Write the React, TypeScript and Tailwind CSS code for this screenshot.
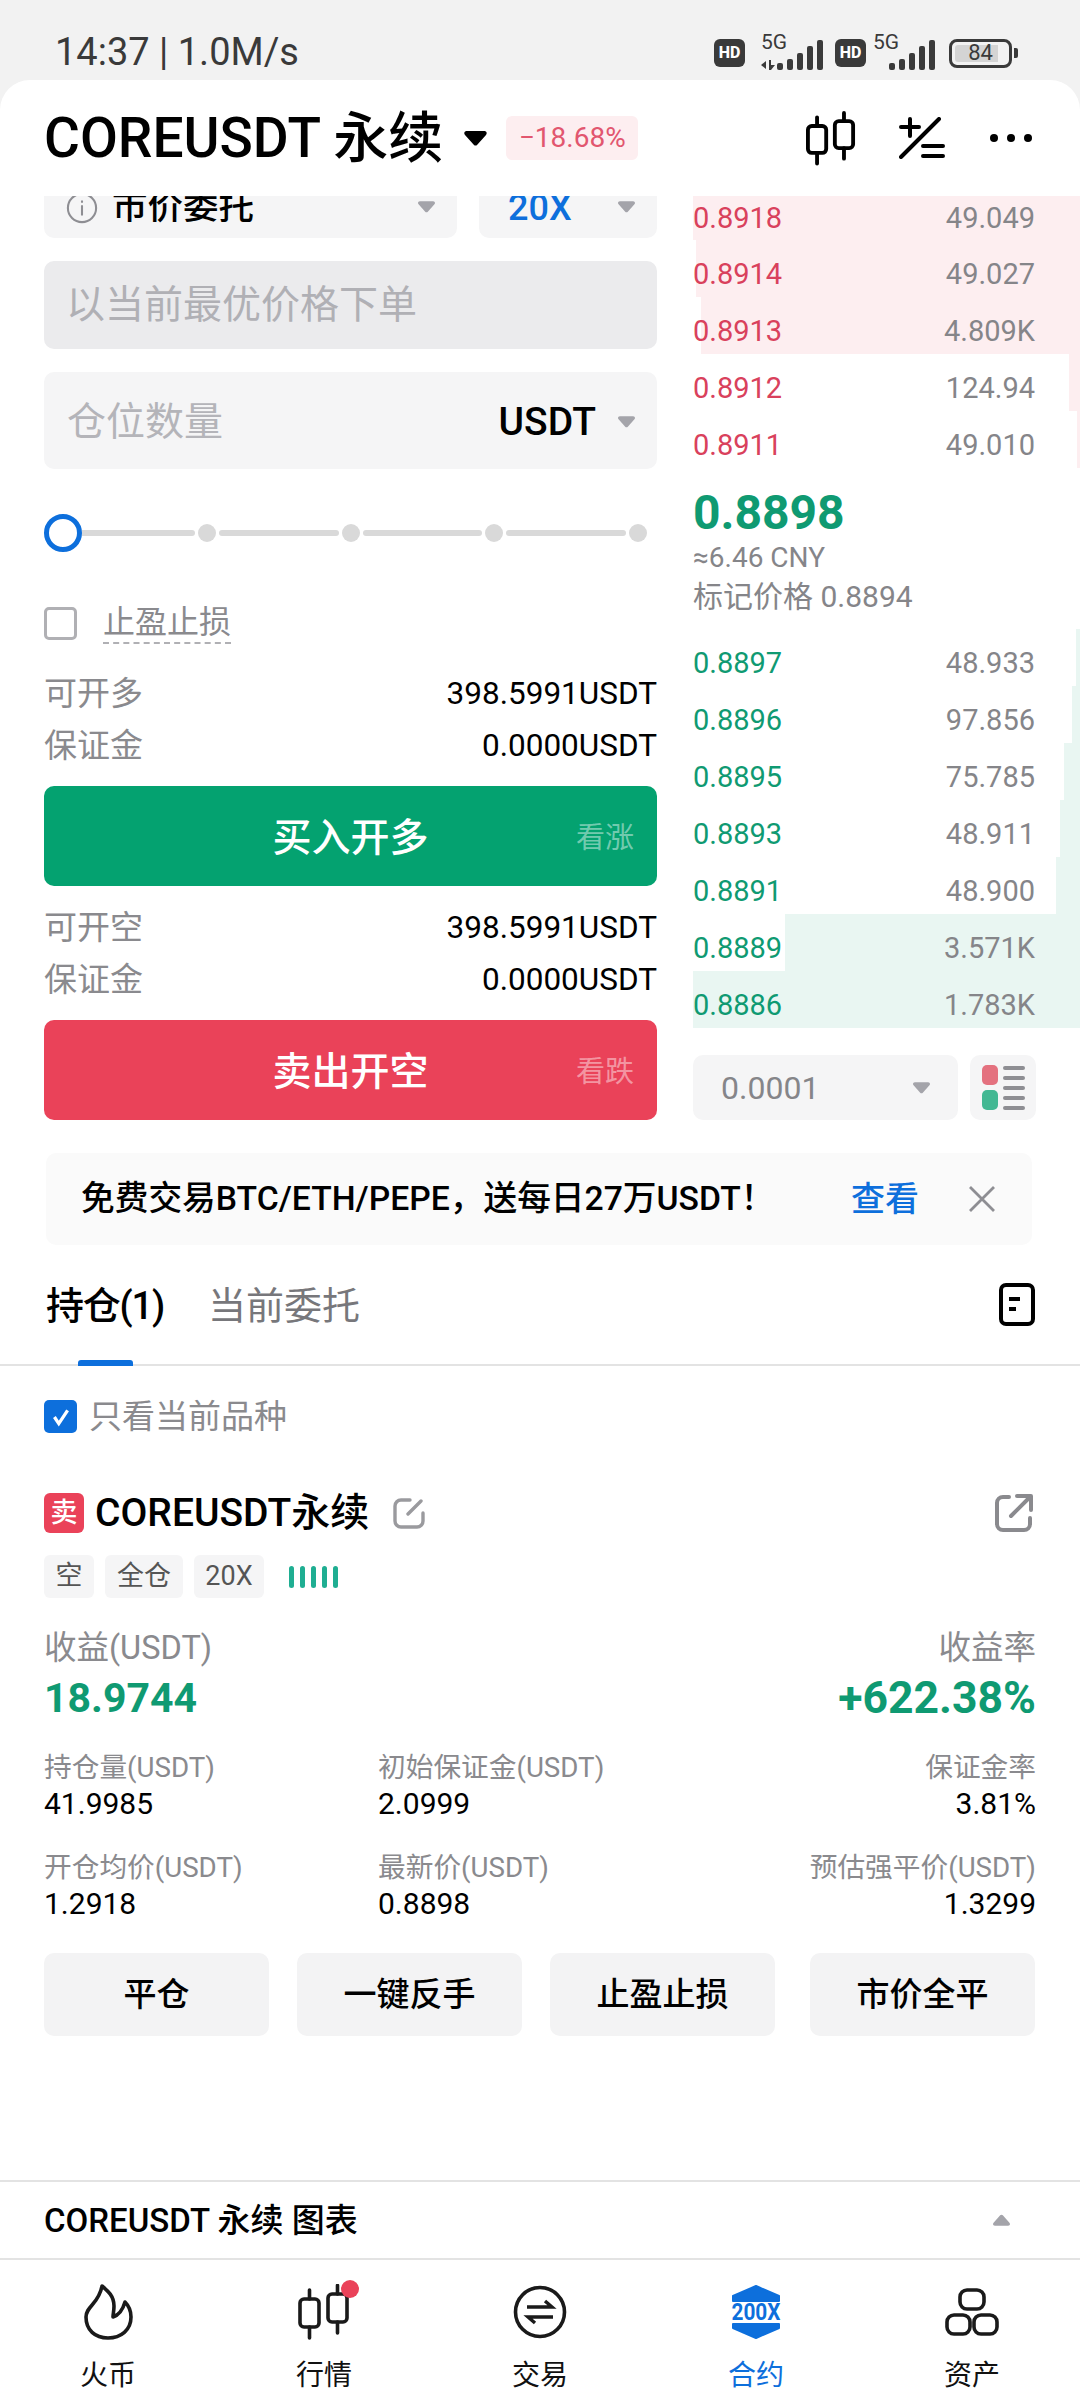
import React from 'react';

const asks = [
    { price: '0.8918', qty: '49.049', bar: 387 },
    { price: '0.8914', qty: '49.027', bar: 384 },
    { price: '0.8913', qty: '4.809K', bar: 379 },
    { price: '0.8912', qty: '124.94', bar: 11 },
    { price: '0.8911', qty: '49.010', bar: 3 },
];

const bids = [
    { price: '0.8897', qty: '48.933', bar: 4 },
    { price: '0.8896', qty: '97.856', bar: 8 },
    { price: '0.8895', qty: '75.785', bar: 16 },
    { price: '0.8893', qty: '48.911', bar: 20 },
    { price: '0.8891', qty: '48.900', bar: 24 },
    { price: '0.8889', qty: '3.571K', bar: 295 },
    { price: '0.8886', qty: '1.783K', bar: 387 },
];

const Caret = ({ className }: { className: string }) => (
    <svg viewBox="0 0 18 12" className={className} fill="currentColor">
        <path d="M2 0h14c1.8 0 2.6 1.8 1.4 3.1L10.4 11c-.8.9-2 .9-2.8 0L.6 3.1C-.6 1.8.2 0 2 0z" />
    </svg>
);

const Candles = ({ className, sw = 2.6 }: { className: string; sw?: number }) => (
    <svg viewBox="0 0 52 56" className={className} fill="none" stroke="currentColor" strokeWidth={sw} strokeLinecap="round">
        <rect x="2" y="15" width="19" height="28" rx="4" />
        <path d="M11.5 6v9M11.5 43v11" />
        <rect x="30" y="10" width="19" height="28" rx="4" />
        <path d="M39.5 1.5v8.5M39.5 38v11" />
    </svg>
);

const Signal = ({ arrows }: { arrows?: boolean }) => (
    <div className="relative flex h-[34px] w-[62px] items-end justify-end gap-[4px]">
        <span className="absolute left-[0px] top-[-5px] text-[21px] leading-[22px] text-[#3a3a3a]">5G</span>
        {arrows && (
            <svg viewBox="0 0 14 10" className="absolute bottom-[0px] left-[0px] h-[10px] w-[14px] text-[#3a3a3a]" fill="currentColor">
                <path d="M0 5l5-4v8zM8 0h2v5l4 0-4 5H8z" />
            </svg>
        )}
        <i className="block h-[7px] w-[6px] rounded-[2px] bg-[#3a3a3a]" />
        <i className="block h-[11px] w-[6px] rounded-[2px] bg-[#3a3a3a]" />
        <i className="block h-[17px] w-[6px] rounded-[2px] bg-[#3a3a3a]" />
        <i className="block h-[24px] w-[6px] rounded-[2px] bg-[#3a3a3a]" />
        <i className="block h-[30px] w-[6px] rounded-[2px] bg-[#3a3a3a]" />
    </div>
);

const Hd = () => (
    <span className="flex h-[28px] w-[31px] items-center justify-center rounded-[6px] bg-[#3a3a3a] text-[16px] font-extrabold leading-none text-white">HD</span>
);

const BookRow = ({ price, qty, bar, side, first }: { price: string; qty: string; bar: number; side: 'ask' | 'bid'; first?: boolean }) => (
    <div className={`relative flex items-center justify-between pr-[45px] ${first ? 'h-[44px]' : 'h-[57px] pt-[10px]'}`}>
        <div className={`absolute right-0 top-0 bottom-0 ${side === 'ask' ? 'bg-[#fdeef0]' : 'bg-[#e9f6f2]'}`} style={{ width: bar }} />
        <span className={`relative text-[29px] leading-[34px] ${side === 'ask' ? 'text-[#d9415c]' : 'text-[#0f9a72]'}`}>{price}</span>
        <span className="relative text-[29px] leading-[34px] text-[#858589]">{qty}</span>
    </div>
);

const TradeAction = ({ label, hint, color }: { label: string; hint: string; color: string }) => (
    <div className={`grid h-[100px] grid-cols-[1fr_auto_1fr] items-center rounded-[10px] px-[23px] pt-[4px] text-white ${color}`}>
        <span />
        <span className="text-[39px] font-medium leading-none">{label}</span>
        <span className="justify-self-end text-[29px] leading-none text-white/45">{hint}</span>
    </div>
);

const InfoRows = ({ title, value }: { title: string; value: string }) => (
    <div className="pt-[1px] text-[31.5px]">
        <div className="flex h-[52px] items-center justify-between">
            <span className="text-[33px] text-[#8a8a8e]">{title}</span>
            <span className="text-black">{value}</span>
        </div>
        <div className="-mb-[1px] flex h-[52px] items-center justify-between">
            <span className="text-[33px] text-[#8a8a8e]">保证金</span>
            <span className="text-black">0.0000USDT</span>
        </div>
    </div>
);

const Stat = ({ label, value, right }: { label: string; value: string; right?: boolean }) => (
    <div className={right ? 'text-right' : ''}>
        <div className="text-[27.7px] leading-[35px] text-[#8a8a8e]">{label}</div>
        <div className="text-[30px] leading-[38px] text-black">{value}</div>
    </div>
);

const NavItem = ({ label, active, children }: { label: string; active?: boolean; children: React.ReactNode }) => (
    <div className="flex w-[216px] flex-col items-center">
        <div className="relative flex h-[58px] w-[60px] items-center justify-center">{children}</div>
        <span className={`mt-[17px] text-[28px] leading-[36px] ${active ? 'text-[#0d6fdc]' : 'text-[#111]'}`}>{label}</span>
    </div>
);

export default function App() {
    return (
        <div
            className="flex h-[2400px] w-[1080px] flex-col overflow-hidden bg-[#f2f2f2]"
            style={{ fontFamily: 'Roboto, "Noto Sans CJK SC", sans-serif' }}
        >
            {/* status bar */}
            <div className="flex h-[80px] shrink-0 items-start justify-between pl-[55px] pr-[62px] pt-[32px]">
                <span className="text-[38px] leading-[40px] text-[#3a3a3a]">14:37 | 1.0M/s</span>
                <div className="flex items-center pt-[4px]">
                    <Hd />
                    <div className="ml-[16px] mr-[12px]">
                        <Signal arrows />
                    </div>
                    <Hd />
                    <div className="ml-[7px] mr-[14px]">
                        <Signal />
                    </div>
                    <div className="flex h-[29px] w-[63px] items-center justify-center rounded-[8px] border-[3px] border-[#3a3a3a] p-[3px]">
                        <span className="flex h-full w-full items-center justify-center rounded-[3px] bg-[linear-gradient(90deg,#d4d4d4_84%,transparent_84%)] text-[22px] leading-none text-[#3a3a3a]">84</span>
                    </div>
                    <i className="ml-[2px] block h-[10px] w-[4px] rounded-r-[2px] bg-[#3a3a3a]" />
                </div>
            </div>

            <div className="flex flex-1 flex-col rounded-t-[30px] bg-white">
                {/* header */}
                <div className="flex h-[116px] shrink-0 items-center pl-[44px] pr-[48px]">
                    <span className="text-[55px] font-medium leading-none text-black">COREUSDT 永续</span>
                    <Caret className="ml-[20px] h-[15px] w-[25px] text-black" />
                    <span className="ml-[18px] flex h-[44px] w-[132px] items-center justify-center rounded-[6px] bg-[#fdeef0] text-[28px] leading-none text-[#e2566f]">−18.68%</span>
                    <Candles className="ml-auto h-[55px] w-[50px] text-black" sw={4} />
                    <svg viewBox="0 0 46 42" className="ml-[43px] h-[42px] w-[46px] text-black" fill="none" stroke="currentColor" strokeWidth="4" strokeLinecap="round">
                        <path d="M2 10h18M11 2v17M2 40L40 2M24 29h20M24 39h20" />
                    </svg>
                    <svg viewBox="0 0 42 10" className="ml-[45px] h-[10px] w-[42px] text-black" fill="currentColor">
                        <circle cx="4" cy="5" r="4" />
                        <circle cx="21" cy="5" r="4" />
                        <circle cx="38" cy="5" r="4" />
                    </svg>
                </div>

                {/* order form and book */}
                <div className="flex shrink-0">
                    <div className="ml-[44px] w-[613px] shrink-0">
                        <div className="flex h-[42px] gap-[22px]">
                            <div className="flex w-[413px] items-center justify-between overflow-hidden rounded-b-[10px] bg-[#f5f5f6] pl-[22px] pr-[22px]">
                                <div className="mt-[-18px] flex items-center">
                                    <svg viewBox="0 0 34 34" className="h-[32px] w-[32px] text-[#8e8e93]" fill="none" stroke="currentColor" strokeWidth="2.2">
                                        <circle cx="17" cy="17" r="15" />
                                        <path d="M17 14v11M17 9v2.5" />
                                    </svg>
                                    <span className="ml-[14px] text-[35.5px] font-medium leading-none text-black">市价委托</span>
                                </div>
                                <Caret className="mt-[-20px] h-[12px] w-[17px] text-[#a4a4aa]" />
                            </div>
                            <div className="flex flex-1 items-center justify-between overflow-hidden rounded-b-[10px] bg-[#f5f5f6] pl-[29px] pr-[22px]">
                                <span className="mt-[-18px] text-[36px] font-medium leading-none text-[#0d6fdc]">20X</span>
                                <Caret className="mt-[-20px] h-[12px] w-[17px] text-[#a4a4aa]" />
                            </div>
                        </div>

                        <div className="mt-[23px] flex h-[88px] items-center rounded-[10px] bg-[#ebebed] pl-[22px] text-[39px] leading-none text-[#b0b0b5]">以当前最优价格下单</div>

                        <div className="mt-[23px] flex h-[97px] items-center justify-between rounded-[10px] bg-[#f5f5f6] pl-[23px] pr-[22px]">
                            <span className="pt-[3px] text-[39px] leading-none text-[#b4b4b9]">仓位数量</span>
                            <div className="flex items-center pt-[3px]">
                                <span className="text-[39px] font-medium leading-none text-black">USDT</span>
                                <Caret className="ml-[22px] h-[12px] w-[17px] text-[#a4a4aa]" />
                            </div>
                        </div>

                        {/* leverage slider */}
                        <div className="mt-[45px] flex h-[38px] items-center gap-[3px] pr-[10px]">
                            <i className="block h-[38px] w-[38px] shrink-0 rounded-full border-[5px] border-[#0d6fdc]" />
                            <i className="-ml-[3px] block h-[6px] w-[113px] shrink-0 rounded-r-full bg-[#d9d9d9]" />
                            <i className="block h-[18px] w-[18px] shrink-0 rounded-full bg-[#d9d9d9]" />
                            <i className="block h-[6px] flex-1 rounded-full bg-[#d9d9d9]" />
                            <i className="block h-[18px] w-[18px] shrink-0 rounded-full bg-[#d9d9d9]" />
                            <i className="block h-[6px] flex-1 rounded-full bg-[#d9d9d9]" />
                            <i className="block h-[18px] w-[18px] shrink-0 rounded-full bg-[#d9d9d9]" />
                            <i className="block h-[6px] flex-1 rounded-full bg-[#d9d9d9]" />
                            <i className="block h-[18px] w-[18px] shrink-0 rounded-full bg-[#d9d9d9]" />
                        </div>

                        <div className="mt-[55px] flex h-[33px] items-center">
                            <i className="block h-[33px] w-[33px] rounded-[5px] border-[3px] border-[#b0b0b4]" />
                            <span className="ml-[26px] border-b-2 border-dashed border-[#b0b0b4] pb-[2px] text-[32px] leading-[36px] text-[#8a8a8e]">止盈止损</span>
                        </div>

                        <div className="mt-[27px]">
                            <InfoRows title="可开多" value="398.5991USDT" />
                        </div>
                        <div className="mt-[15px]">
                            <TradeAction label="买入开多" hint="看涨" color="bg-[#04a270]" />
                        </div>
                        <div className="mt-[15px]">
                            <InfoRows title="可开空" value="398.5991USDT" />
                        </div>
                        <div className="mt-[15px]">
                            <TradeAction label="卖出开空" hint="看跌" color="bg-[#ea4259]" />
                        </div>
                    </div>

                    <div className="ml-[36px] w-[387px] shrink-0">
                        {asks.map((row, i) => (
                            <BookRow key={row.price} {...row} side="ask" first={i === 0} />
                        ))}
                        <div className="h-[161px] pt-[17px]">
                            <div className="text-[48px] font-bold leading-[56px] text-[#0f9a72]">0.8898</div>
                            <div className="text-[28px] leading-[34px] text-[#858589]">≈6.46 CNY</div>
                            <div className="mt-[2px] text-[30px] leading-[40px] text-[#858589]">标记价格 0.8894</div>
                        </div>
                        {bids.map((row) => (
                            <BookRow key={row.price} {...row} side="bid" />
                        ))}
                        <div className="mt-[27px] flex gap-[12px]">
                            <div className="flex h-[65px] w-[265px] items-center justify-between rounded-[10px] bg-[#f5f5f6] pl-[28px] pr-[28px]">
                                <span className="text-[32px] leading-none text-[#858589]">0.0001</span>
                                <Caret className="h-[12px] w-[17px] text-[#a4a4aa]" />
                            </div>
                            <div className="flex h-[65px] w-[66px] items-center justify-center gap-[5px] rounded-[10px] bg-[#f5f5f6]">
                                <div className="flex flex-col gap-[5px]">
                                    <i className="block h-[20px] w-[16px] rounded-[5px] bg-[#e4717f]" />
                                    <i className="block h-[20px] w-[16px] rounded-[5px] bg-[#43b893]" />
                                </div>
                                <div className="flex flex-col gap-[6px]">
                                    <i className="block h-[4px] w-[22px] rounded-full bg-[#8e8e93]" />
                                    <i className="block h-[4px] w-[22px] rounded-full bg-[#8e8e93]" />
                                    <i className="block h-[4px] w-[22px] rounded-full bg-[#8e8e93]" />
                                    <i className="block h-[4px] w-[22px] rounded-full bg-[#8e8e93]" />
                                    <i className="block h-[4px] w-[22px] rounded-full bg-[#8e8e93]" />
                                </div>
                            </div>
                        </div>
                    </div>
                </div>

                {/* promo banner */}
                <div className="ml-[46px] mt-[33px] flex h-[92px] w-[986px] shrink-0 items-center rounded-[10px] bg-[#fafafa] pl-[35px] pr-[37px]">
                    <span className="text-[33.7px] font-medium leading-none text-black">免费交易BTC/ETH/PEPE，送每日27万USDT！</span>
                    <span className="ml-auto text-[34px] font-medium leading-none text-[#0d6fdc]">查看</span>
                    <svg viewBox="0 0 26 26" className="ml-[50px] h-[26px] w-[26px] text-[#8e8e93]" fill="none" stroke="currentColor" strokeWidth="2.8">
                        <path d="M1 1l24 24M25 1L1 25" />
                    </svg>
                </div>

                {/* tabs */}
                <div className="flex h-[121px] shrink-0 border-b-2 border-[#e3e3e3] pl-[46px] pr-[45px]">
                    <div className="flex h-[121px] flex-col items-center justify-between pt-[39px]">
                        <span className="text-[38px] font-medium leading-[44px] tracking-[-1.2px] text-black">持仓(1)</span>
                        <i className="block h-[6px] w-[55px] rounded-t-[3px] bg-[#0d6fdc]" />
                    </div>
                    <span className="ml-[44px] pt-[39px] text-[38px] leading-[44px] text-[#77777b]">当前委托</span>
                    <svg viewBox="0 0 36 43" className="ml-auto mt-[38px] h-[43px] w-[36px] text-black" fill="none" stroke="currentColor" strokeWidth="4">
                        <rect x="2" y="2" width="32" height="39" rx="5" />
                        <path d="M10 16h11M10 26h7" />
                    </svg>
                </div>

                {/* position card */}
                <div className="px-[44px] pt-[34px]">
                    <div className="flex h-[33px] items-center">
                        <span className="flex h-[33px] w-[33px] items-center justify-center rounded-[5px] bg-[#0d6fdc]">
                            <svg viewBox="0 0 20 20" className="h-[22px] w-[22px] text-white" fill="none" stroke="currentColor" strokeWidth="3">
                                <path d="M4 10l4 6 8-12" />
                            </svg>
                        </span>
                        <span className="ml-[12px] text-[33px] leading-none text-[#8a8a8e]">只看当前品种</span>
                    </div>

                    <div className="mt-[60px] flex h-[40px] items-center">
                        <span className="flex h-[40px] w-[40px] items-center justify-center rounded-[6px] bg-[#ea4259] text-[27px] font-medium leading-none text-white">卖</span>
                        <span className="ml-[11px] text-[39px] font-medium leading-none text-black">COREUSDT永续</span>
                        <svg viewBox="0 0 32 32" className="ml-[24px] h-[32px] w-[32px] text-[#9a9a9e]" fill="none" stroke="currentColor" strokeWidth="3.4" strokeLinecap="round">
                            <path d="M17 3H8a6 6 0 0 0-6 6v15a6 6 0 0 0 6 6h16a6 6 0 0 0 6-6v-8M15 17L28 4" />
                        </svg>
                        <svg viewBox="0 0 40 40" className="ml-auto mr-[2px] h-[40px] w-[40px] text-[#8a8a8e]" fill="none" stroke="currentColor" strokeWidth="4" strokeLinecap="round" strokeLinejoin="round">
                            <path d="M15 4H9a6 6 0 0 0-6 6v21a6 6 0 0 0 6 6h21a6 6 0 0 0 6-6v-6M17 23L36 4M23 3h14v14" />
                        </svg>
                    </div>

                    <div className="mt-[22px] flex h-[43px] items-center gap-[11px]">
                        <span className="flex h-[43px] w-[50px] items-center justify-center rounded-[6px] bg-[#f5f5f6] text-[27px] leading-none text-[#555]">空</span>
                        <span className="flex h-[43px] w-[78px] items-center justify-center rounded-[6px] bg-[#f5f5f6] text-[27px] leading-none text-[#555]">全仓</span>
                        <span className="flex h-[43px] w-[70px] items-center justify-center rounded-[6px] bg-[#f5f5f6] text-[27px] leading-none text-[#555]">20X</span>
                        <div className="ml-[14px] flex items-center gap-[6px]">
                            <i className="block h-[22px] w-[5px] rounded-full bg-[#1fae92]" />
                            <i className="block h-[22px] w-[5px] rounded-full bg-[#1fae92]" />
                            <i className="block h-[22px] w-[5px] rounded-full bg-[#1fae92]" />
                            <i className="block h-[22px] w-[5px] rounded-full bg-[#1fae92]" />
                            <i className="block h-[22px] w-[5px] rounded-full bg-[#1fae92]" />
                        </div>
                    </div>

                    <div className="mt-[28px] flex h-[44px] items-center justify-between text-[32.5px] leading-none text-[#8a8a8e]">
                        <span>收益(USDT)</span>
                        <span>收益率</span>
                    </div>
                    <div className="flex h-[56px] items-center justify-between font-bold leading-none text-[#0f9a72]">
                        <span className="text-[41px]">18.9744</span>
                        <span className="text-[44.5px]">+622.38%</span>
                    </div>

                    <div className="mt-[24px] grid grid-cols-[334px_1fr_auto] gap-y-[27px]">
                        <Stat label="持仓量(USDT)" value="41.9985" />
                        <Stat label="初始保证金(USDT)" value="2.0999" />
                        <Stat label="保证金率" value="3.81%" right />
                        <Stat label="开仓均价(USDT)" value="1.2918" />
                        <Stat label="最新价(USDT)" value="0.8898" />
                        <Stat label="预估强平价(USDT)" value="1.3299" right />
                    </div>

                    <div className="mt-[30px] flex gap-[28px]">
                        {['平仓', '一键反手', '止盈止损'].map((label) => (
                            <div key={label} className="flex h-[83px] w-[225px] items-center justify-center rounded-[10px] bg-[#f3f3f4] text-[33px] font-medium leading-none text-black">{label}</div>
                        ))}
                        <div className="ml-[7px] flex h-[83px] w-[225px] items-center justify-center rounded-[10px] bg-[#f3f3f4] text-[33px] font-medium leading-none text-black">市价全平</div>
                    </div>
                </div>

                {/* chart toggle and tab bar */}
                <div className="mt-auto flex h-[80px] shrink-0 items-center justify-between border-y-2 border-[#e3e3e3] pl-[44px] pr-[70px]">
                    <span className="text-[33px] font-medium leading-none text-black">COREUSDT 永续 图表</span>
                    <Caret className="h-[12px] w-[17px] rotate-180 text-[#a4a4aa]" />
                </div>
                <div className="flex h-[140px] shrink-0 pt-[23px]">
                    <NavItem label="火币">
                        <svg viewBox="0 0 49 56" className="h-[56px] w-[49px] text-[#1a1a1a]" fill="none" stroke="currentColor" strokeWidth="3.6" strokeLinejoin="round">
                            <path d="M18 2C24 7 30 12 30 22C30 27 29 30 29 33C35 31 39 25 41 18C45 22 47 27 47 33C47 46 37 54 24 54C11 54 2 46 2 33C2 22 15 20 18 2Z" />
                        </svg>
                    </NavItem>
                    <NavItem label="行情">
                        <Candles className="h-[56px] w-[52px] text-[#1a1a1a]" sw={3.6} />
                        <i className="absolute right-[-5px] top-[-3px] block h-[18px] w-[18px] rounded-full bg-[#ea4259]" />
                    </NavItem>
                    <NavItem label="交易">
                        <svg viewBox="0 0 54 54" className="h-[54px] w-[54px] text-[#1a1a1a]" fill="none" stroke="currentColor" strokeWidth="3.6">
                            <circle cx="27" cy="27" r="24.5" />
                            <path d="M14 22h25l-7-6M40 32H15l7 6" strokeWidth="3.4" />
                        </svg>
                    </NavItem>
                    <NavItem label="合约" active>
                        <svg viewBox="0 0 52 56" className="h-[56px] w-[52px] overflow-visible">
                            <path d="M26 2l23 10v5H3v-5z" fill="#0d6fdc" stroke="#0d6fdc" strokeWidth="2" strokeLinejoin="round" />
                            <path d="M26 54L3 44v-4h46v4z" fill="#0d6fdc" stroke="#0d6fdc" strokeWidth="2" strokeLinejoin="round" />
                            <text x="26" y="36" textAnchor="middle" textLength="49" lengthAdjust="spacingAndGlyphs" fontFamily="Roboto" fontWeight="700" fontSize="23" fill="#0d6fdc">200X</text>
                        </svg>
                    </NavItem>
                    <NavItem label="资产">
                        <svg viewBox="0 0 54 48" className="h-[48px] w-[54px] text-[#1a1a1a]" fill="none" stroke="currentColor" strokeWidth="3.6">
                            <rect x="15" y="2" width="24" height="19" rx="7" />
                            <rect x="2" y="27" width="23" height="19" rx="7" />
                            <rect x="29" y="27" width="23" height="19" rx="7" />
                        </svg>
                    </NavItem>
                </div>
            </div>
        </div>
    );
}
